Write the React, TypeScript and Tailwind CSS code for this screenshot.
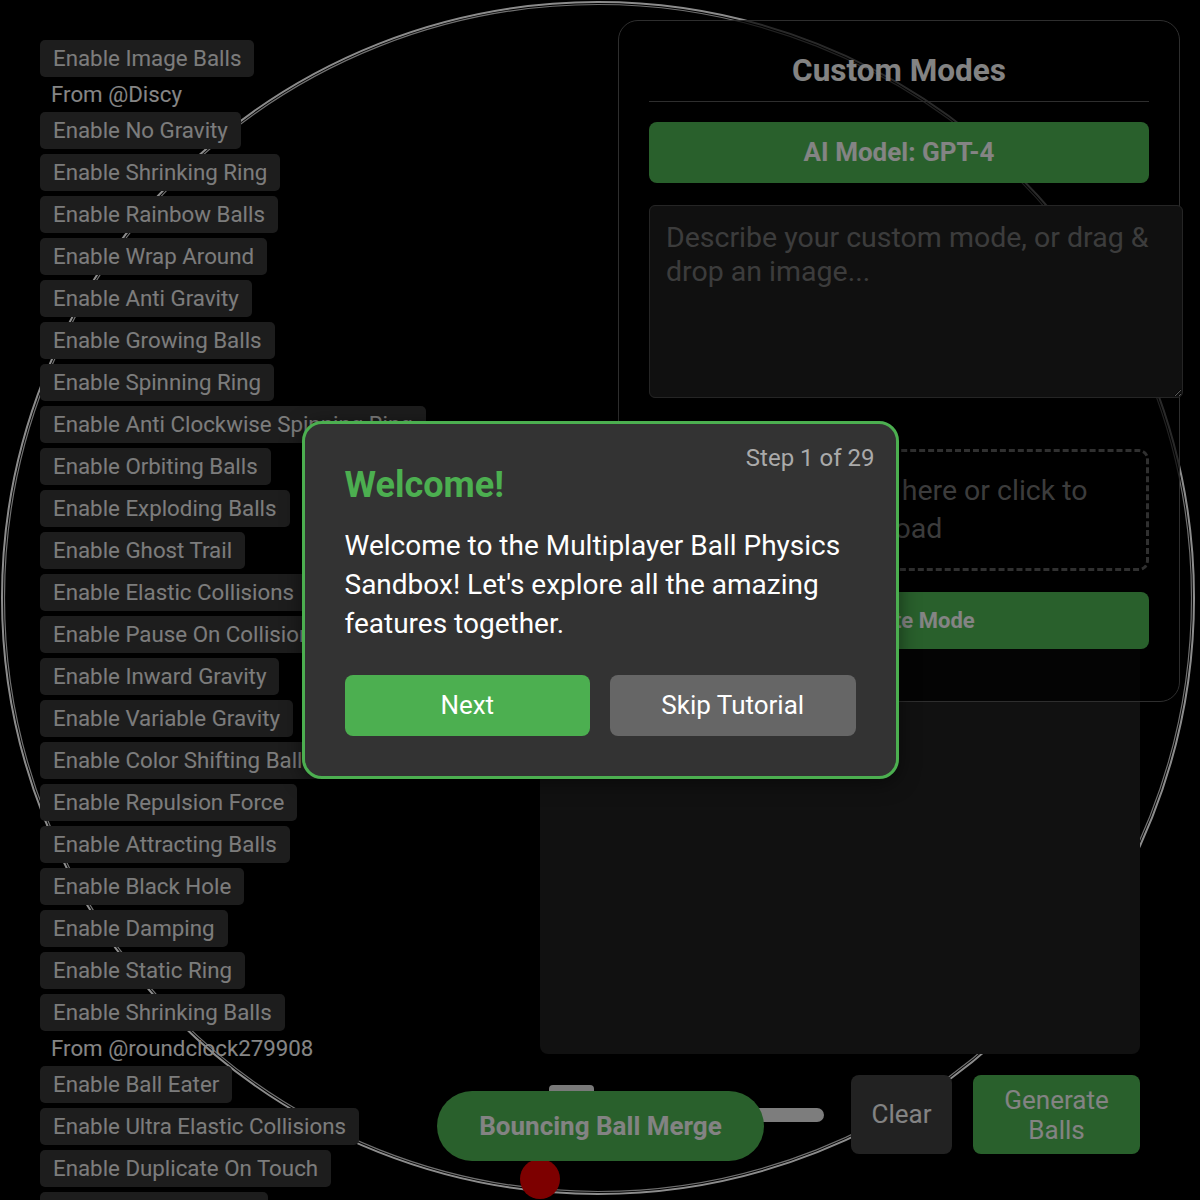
import React from "react";

type Item = { kind: "btn" | "label"; text: string };

const modes: Item[] = [
  { kind: "btn", text: "Enable Image Balls" },
  { kind: "label", text: "From @Discy" },
  { kind: "btn", text: "Enable No Gravity" },
  { kind: "btn", text: "Enable Shrinking Ring" },
  { kind: "btn", text: "Enable Rainbow Balls" },
  { kind: "btn", text: "Enable Wrap Around" },
  { kind: "btn", text: "Enable Anti Gravity" },
  { kind: "btn", text: "Enable Growing Balls" },
  { kind: "btn", text: "Enable Spinning Ring" },
  { kind: "btn", text: "Enable Anti Clockwise Spinning Ring" },
  { kind: "btn", text: "Enable Orbiting Balls" },
  { kind: "btn", text: "Enable Exploding Balls" },
  { kind: "btn", text: "Enable Ghost Trail" },
  { kind: "btn", text: "Enable Elastic Collisions" },
  { kind: "btn", text: "Enable Pause On Collision" },
  { kind: "btn", text: "Enable Inward Gravity" },
  { kind: "btn", text: "Enable Variable Gravity" },
  { kind: "btn", text: "Enable Color Shifting Balls" },
  { kind: "btn", text: "Enable Repulsion Force" },
  { kind: "btn", text: "Enable Attracting Balls" },
  { kind: "btn", text: "Enable Black Hole" },
  { kind: "btn", text: "Enable Damping" },
  { kind: "btn", text: "Enable Static Ring" },
  { kind: "btn", text: "Enable Shrinking Balls" },
  { kind: "label", text: "From @roundclock279908" },
  { kind: "btn", text: "Enable Ball Eater" },
  { kind: "btn", text: "Enable Ultra Elastic Collisions" },
  { kind: "btn", text: "Enable Duplicate On Touch" },
  { kind: "btn", text: "Enable Magnet Balls" },
];

function ArenaCanvas() {
  return (
    <svg
      className="absolute inset-0 -z-10"
      width={1200}
      height={1200}
      viewBox="0 0 1200 1200"
    >
      <circle cx={598} cy={598} r={596} fill="none" stroke="#ffffff" strokeWidth={2} />
      <circle cx={598} cy={598} r={593.5} fill="none" stroke="#ffffff" strokeOpacity={0.8} strokeWidth={1.2} />
      <circle cx={540} cy={1179} r={20} fill="#e40000" />
    </svg>
  );
}

function ModeList() {
  return (
    <div className="flex flex-col items-start gap-[5px] pl-10 pt-10">
      {modes.map((m, i) =>
        m.kind === "btn" ? (
          <button
            key={i}
            className="flex h-[37px] shrink-0 items-center whitespace-nowrap rounded-[5px] bg-[#353535] px-[13px] text-[22.3px] text-[#e2e2e2]"
          >
            {m.text}
          </button>
        ) : (
          <div
            key={i}
            className="flex h-[25px] shrink-0 items-center whitespace-nowrap pl-[11px] text-[22.3px] text-[#f2f2f2]"
          >
            {m.text}
          </div>
        )
      )}
    </div>
  );
}

function CustomModesPanel() {
  return (
    <div className="relative z-10 flex w-[562px] flex-col rounded-[20px] border border-[#555] bg-black/70 px-[30px] pb-[52px] pt-[32px]">
      <h2 className="mb-5 border-b border-[#555] pb-3 text-center text-[31.5px] font-bold leading-[36px] text-[#eeeeee]">
        Custom Modes
      </h2>
      <button className="h-[61px] rounded-lg bg-[#4caf50] text-[26px] font-bold text-[#f0f0f0]">
        AI Model: GPT-4
      </button>
      <textarea
        className="mt-[22px] box-content h-[161px] w-full resize rounded-md border border-[#444] bg-[#1e1e1e] px-4 py-[15px] text-[28.5px] leading-[34px] text-white placeholder:text-[#6e6e6e] outline-none"
        placeholder="Describe your custom mode, or drag & drop an image..."
      />
      <div className="mt-[51px] flex h-[122px] items-center justify-center rounded-[10px] border-[3px] border-dashed border-[#585858] px-6 text-center text-[28.5px] leading-[38px] text-[#6e6e6e]">
        Drop an image here or click to upload
      </div>
      <button className="mt-[21px] h-[57px] rounded-lg bg-[#4caf50] text-[22px] font-bold text-[#f0f0f0]">
        Generate Mode
      </button>
    </div>
  );
}

function Controls() {
  return (
    <div className="mr-10 mt-[21px] flex h-[79px] items-stretch">
      <div className="relative mr-[27px] flex w-[380px] items-center">
        <div className="h-[14px] w-full rounded-full bg-[#e4e4e4]" />
        <div className="absolute left-[105px] top-[10px] h-[59px] w-[45px] rounded-sm bg-[#dcdcdc]" />
        <div className="absolute -left-[7px] top-4 flex h-[70px] w-[327px] items-center justify-center rounded-full bg-[#4caf50] text-[26px] font-bold text-[#eeeeee]">
          Bouncing Ball Merge
        </div>
      </div>
      <button className="w-[101px] rounded-lg bg-[#3f3f3f] text-[26px] text-[#eeeeee]">
        Clear
      </button>
      <button className="ml-[21px] w-[167px] rounded-lg bg-[#4caf50] py-[10px] text-[26px] leading-[30px] text-[#eeeeee]">
        Generate
        <br />
        Balls
      </button>
    </div>
  );
}

function TutorialDialog() {
  return (
    <div className="absolute inset-0 z-50 flex items-center justify-center">
      <div className="relative w-[597px] rounded-[20px] border-[3px] border-[#4caf50] bg-[#333333] px-10 py-10 shadow-[0_4px_20px_rgba(0,0,0,0.5)]">
        <div className="absolute right-[21px] top-[20px] text-[24px] leading-[28px] text-[#aaaaaa]">
          Step 1 of 29
        </div>
        <h3 className="mb-5 text-[36px] font-bold leading-[42px] text-[#4caf50]">
          Welcome!
        </h3>
        <p className="text-[28px] leading-[39px] text-white">
          Welcome to the Multiplayer Ball Physics Sandbox! Let's explore all the
          amazing features together.
        </p>
        <div className="mt-8 flex gap-5">
          <button className="h-[61px] flex-1 rounded-lg bg-[#4caf50] text-[26px] text-white">
            Next
          </button>
          <button className="h-[61px] flex-1 rounded-lg bg-[#666666] text-[26px] text-white">
            Skip Tutorial
          </button>
        </div>
      </div>
    </div>
  );
}

export default function App() {
  return (
    <div className="relative isolate grid h-[1200px] w-[1200px] grid-cols-[436px_1fr] overflow-hidden bg-black font-['Roboto',sans-serif]">
      <ArenaCanvas />
      <ModeList />
      <div className="flex flex-col items-end pr-5 pt-5">
        <CustomModesPanel />
        <div className="relative mr-10 -mt-[61px] h-[413px] w-[600px] rounded-lg bg-[#1f1f1f]" />
        <Controls />
      </div>
      <div className="absolute inset-0 z-40 bg-black/45" />
      <TutorialDialog />
    </div>
  );
}
